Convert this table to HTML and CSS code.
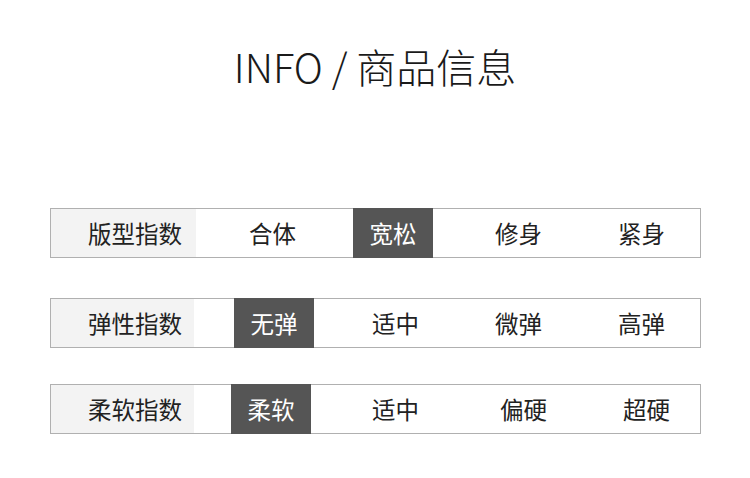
FILE: index.html
```html
<!DOCTYPE html>
<html lang="zh-CN">
<head>
<meta charset="utf-8">
<link rel="stylesheet" href="styles.css">
</head>
<body>
<div class="page">
  <h1 class="title">INFO / 商品信息</h1>
  <div class="row row-1">
    <div class="label">版型指数</div>
    <div class="opts">
      <div class="opt">合体</div>
      <div class="opt"><span class="on">宽松</span></div>
      <div class="opt">修身</div>
      <div class="opt">紧身</div>
    </div>
  </div>
  <div class="row row-2">
    <div class="label">弹性指数</div>
    <div class="opts">
      <div class="opt"><span class="on">无弹</span></div>
      <div class="opt">适中</div>
      <div class="opt">微弹</div>
      <div class="opt">高弹</div>
    </div>
  </div>
  <div class="row row-3">
    <div class="label">柔软指数</div>
    <div class="opts">
      <div class="opt"><span class="on">柔软</span></div>
      <div class="opt">适中</div>
      <div class="opt">偏硬</div>
      <div class="opt">超硬</div>
    </div>
  </div>
</div>
</body>
</html>
```
FILE: styles.css
```css
html, body {
  margin: 0;
  padding: 0;
  background: #ffffff;
}
body {
  font-family: "Noto Sans CJK SC", "Noto Sans", sans-serif;
  color: #222222;
}
.page {
  width: 750px;
  height: 478px;
  padding-top: 42px;
  box-sizing: border-box;
  overflow: hidden;
}
.title {
  margin: 0;
  height: 48px;
  line-height: 48px;
  font-size: 40px;
  font-weight: 300;
  text-align: center;
  color: #1a1a1a;
}
.row {
  display: flex;
  margin-left: 50px;
  width: 651px;
  height: 50px;
  box-sizing: border-box;
  border: 1px solid #b0b0b0;
  font-size: 23.5px;
  font-weight: 400;
  line-height: 46px;
}
.row-1 { margin-top: 118px; }
.row-2 { margin-top: 40px; }
.row-3 { margin-top: 36px; }
.label {
  flex: 0 0 145px;
  background: #f3f3f3;
  padding-left: 37px;
  box-sizing: border-box;
  white-space: nowrap;
  display: flex;
  align-items: center;
}
.row-2 .label, .row-3 .label { flex-basis: 143px; }
.opts {
  display: flex;
  flex-shrink: 0;
  padding-left: 15px;
}
.row-2 .opts, .row-3 .opts { padding-left: 17px; }
.opt {
  flex: 0 0 123px;
  box-sizing: border-box;
  white-space: nowrap;
  display: flex;
  align-items: center;
  justify-content: center;
  margin: -1px 0;
}
.on {
  width: 80px;
  align-self: stretch;
  background: #555555;
  color: #ffffff;
  display: flex;
  align-items: center;
  justify-content: center;
}
.row-1 .on { margin-left: -5px; }
.row-2 .on { margin-left: 3px; }
.row-3 .on { margin-left: -3px; }
.row-3 .opt:nth-child(3), .row-3 .opt:nth-child(4) { padding-left: 10px; }
```
